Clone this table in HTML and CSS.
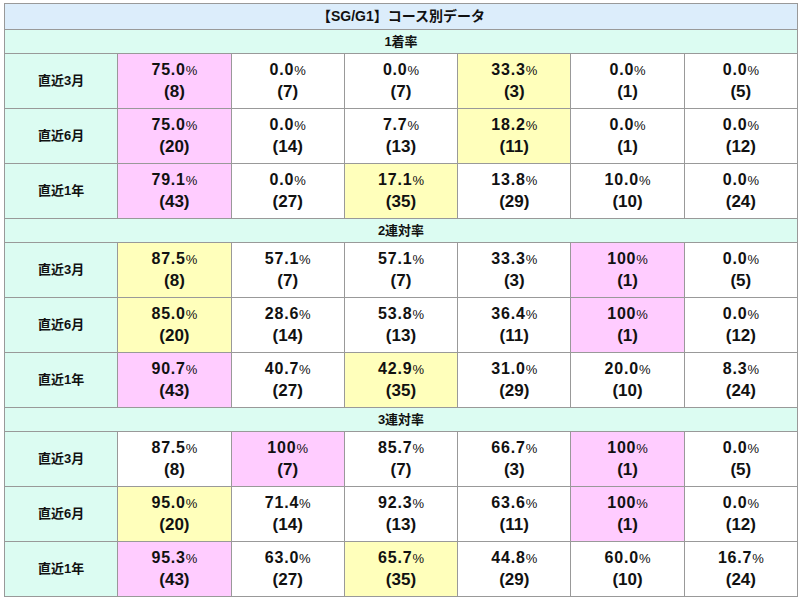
FILE: index.html
```html
<!DOCTYPE html>
<html lang="ja">
<head>
<meta charset="utf-8">
<title>【SG/G1】コース別データ</title>
<link rel="stylesheet" href="styles.css">
</head>
<body>
<table class="course">
  <colgroup><col><col><col><col><col><col><col></colgroup>
  <tr><th class="title" colspan="7">【SG/G1】コース別データ</th></tr>

  <tr><th class="sect" colspan="7">1着率</th></tr>
  <tr>
    <th class="lbl">直近3月</th>
    <td class="pk"><b>75.0</b><i>%</i><br>(8)</td>
    <td><b>0.0</b><i>%</i><br>(7)</td>
    <td><b>0.0</b><i>%</i><br>(7)</td>
    <td class="yl"><b>33.3</b><i>%</i><br>(3)</td>
    <td><b>0.0</b><i>%</i><br>(1)</td>
    <td><b>0.0</b><i>%</i><br>(5)</td>
  </tr>
  <tr>
    <th class="lbl">直近6月</th>
    <td class="pk"><b>75.0</b><i>%</i><br>(20)</td>
    <td><b>0.0</b><i>%</i><br>(14)</td>
    <td><b>7.7</b><i>%</i><br>(13)</td>
    <td class="yl"><b>18.2</b><i>%</i><br>(11)</td>
    <td><b>0.0</b><i>%</i><br>(1)</td>
    <td><b>0.0</b><i>%</i><br>(12)</td>
  </tr>
  <tr>
    <th class="lbl">直近1年</th>
    <td class="pk"><b>79.1</b><i>%</i><br>(43)</td>
    <td><b>0.0</b><i>%</i><br>(27)</td>
    <td class="yl"><b>17.1</b><i>%</i><br>(35)</td>
    <td><b>13.8</b><i>%</i><br>(29)</td>
    <td><b>10.0</b><i>%</i><br>(10)</td>
    <td><b>0.0</b><i>%</i><br>(24)</td>
  </tr>

  <tr><th class="sect" colspan="7">2連対率</th></tr>
  <tr>
    <th class="lbl">直近3月</th>
    <td class="yl"><b>87.5</b><i>%</i><br>(8)</td>
    <td><b>57.1</b><i>%</i><br>(7)</td>
    <td><b>57.1</b><i>%</i><br>(7)</td>
    <td><b>33.3</b><i>%</i><br>(3)</td>
    <td class="pk"><b>100</b><i>%</i><br>(1)</td>
    <td><b>0.0</b><i>%</i><br>(5)</td>
  </tr>
  <tr>
    <th class="lbl">直近6月</th>
    <td class="yl"><b>85.0</b><i>%</i><br>(20)</td>
    <td><b>28.6</b><i>%</i><br>(14)</td>
    <td><b>53.8</b><i>%</i><br>(13)</td>
    <td><b>36.4</b><i>%</i><br>(11)</td>
    <td class="pk"><b>100</b><i>%</i><br>(1)</td>
    <td><b>0.0</b><i>%</i><br>(12)</td>
  </tr>
  <tr>
    <th class="lbl">直近1年</th>
    <td class="pk"><b>90.7</b><i>%</i><br>(43)</td>
    <td><b>40.7</b><i>%</i><br>(27)</td>
    <td class="yl"><b>42.9</b><i>%</i><br>(35)</td>
    <td><b>31.0</b><i>%</i><br>(29)</td>
    <td><b>20.0</b><i>%</i><br>(10)</td>
    <td><b>8.3</b><i>%</i><br>(24)</td>
  </tr>

  <tr><th class="sect" colspan="7">3連対率</th></tr>
  <tr>
    <th class="lbl">直近3月</th>
    <td><b>87.5</b><i>%</i><br>(8)</td>
    <td class="pk"><b>100</b><i>%</i><br>(7)</td>
    <td><b>85.7</b><i>%</i><br>(7)</td>
    <td><b>66.7</b><i>%</i><br>(3)</td>
    <td class="pk"><b>100</b><i>%</i><br>(1)</td>
    <td><b>0.0</b><i>%</i><br>(5)</td>
  </tr>
  <tr>
    <th class="lbl">直近6月</th>
    <td class="yl"><b>95.0</b><i>%</i><br>(20)</td>
    <td><b>71.4</b><i>%</i><br>(14)</td>
    <td><b>92.3</b><i>%</i><br>(13)</td>
    <td><b>63.6</b><i>%</i><br>(11)</td>
    <td class="pk"><b>100</b><i>%</i><br>(1)</td>
    <td><b>0.0</b><i>%</i><br>(12)</td>
  </tr>
  <tr>
    <th class="lbl">直近1年</th>
    <td class="pk"><b>95.3</b><i>%</i><br>(43)</td>
    <td><b>63.0</b><i>%</i><br>(27)</td>
    <td class="yl"><b>65.7</b><i>%</i><br>(35)</td>
    <td><b>44.8</b><i>%</i><br>(29)</td>
    <td><b>60.0</b><i>%</i><br>(10)</td>
    <td><b>16.7</b><i>%</i><br>(24)</td>
  </tr>
</table>
</body>
</html>
```
FILE: styles.css
```css
html, body {
  background: #ffffff;
}
body {
  margin: 3px 0 0 4px;
  font-family: "Liberation Sans", Arial, "Noto Sans CJK JP", sans-serif;
  color: #111;
}
.course {
  width: 794px;
  table-layout: fixed;
  border-collapse: collapse;
}
.course th,
.course td {
  border: 1px solid #999999;
  text-align: center;
  padding: 0;
}
.title {
  background: #dcedfb;
  font-size: 14px;
  font-weight: bold;
  line-height: 25px;
  height: 25px;
}
.sect {
  background: #dcfcf2;
  font-size: 13px;
  font-weight: bold;
  line-height: 23px;
  height: 23px;
}
.lbl {
  background: #dcfcf2;
  font-size: 13px;
  font-weight: bold;
  line-height: 16px;
  vertical-align: middle;
}
.course td {
  padding: 5px 0;
  height: 44px;
  line-height: 22px;
  font-size: 17px;
  font-weight: bold;
  vertical-align: middle;
  background: #ffffff;
}
.course td b {
  font-size: 16px;
  letter-spacing: 0.8px;
  line-height: 1;
}
.course td i {
  font-style: normal;
  font-weight: normal;
  font-size: 13px;
  line-height: 1;
}
.course td.pk {
  background: #ffccff;
}
.course td.yl {
  background: #ffffbb;
}
```
